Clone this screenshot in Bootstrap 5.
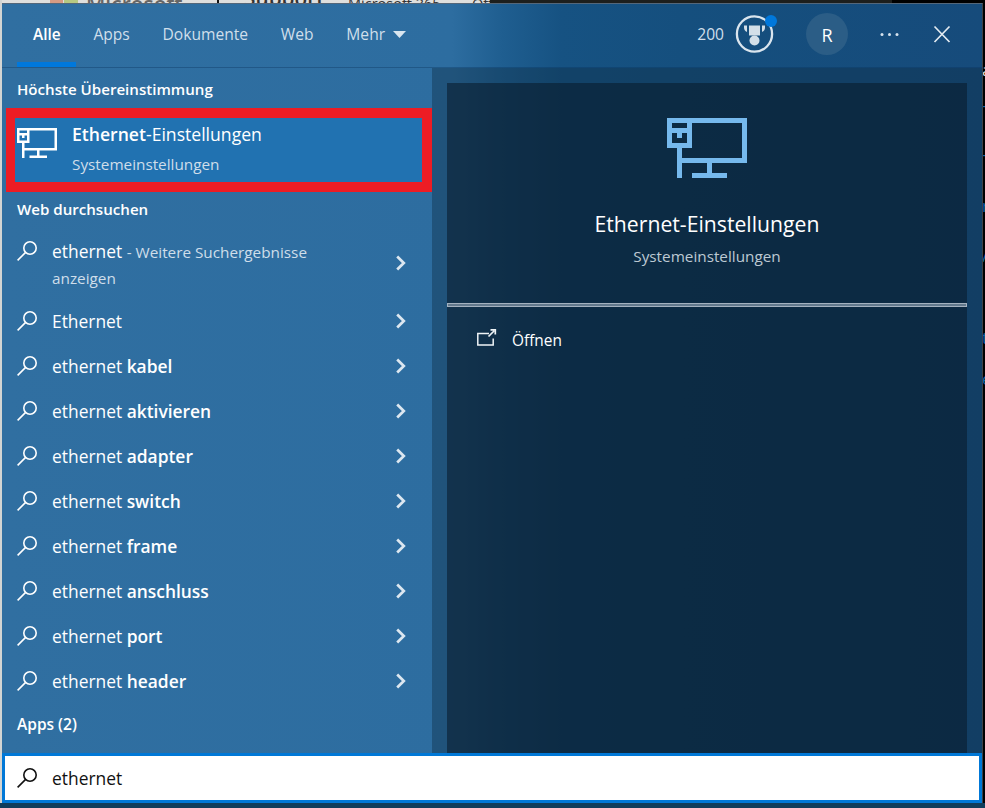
<!DOCTYPE html>
<html lang="de">
<head>
<meta charset="utf-8">
<title>Suche</title>
<link href="https://cdn.jsdelivr.net/npm/bootstrap@5.3.0/dist/css/bootstrap.min.css" rel="stylesheet">
<style>
html,body{height:808px;overflow:hidden}
body{background:#000;font-family:"Open Sans","Noto Sans",sans-serif;font-size:17.4px;line-height:26px;color:#fff}
.screen{width:985px;height:808px;background:#000;padding:3px 2px 5px 2px}
.strip-top{left:0;top:0;height:3px;width:490px;background:#dfdfdd;color:#333;font-weight:600;line-height:22px}
.strip-dark{left:490px;top:0;width:402px;height:3px;background:#1d1f1d}
.strip-top span{position:absolute;white-space:nowrap}
.strip-left{left:0;top:0;width:2px;height:803px;background:#d3d5d3}
.taskbar{left:0;top:803px;width:985px;height:5px;background:#103d5b}
.strip-right{left:983px;top:0;width:2px;height:803px}
.strip-right span{position:absolute;left:-1px;line-height:20px;font-size:17px;color:#0b65ac}
.search-win{height:800px;border-top:1px solid #54677a;border-right:1px solid #3b4247;background:linear-gradient(90deg,#306fa1 0,#2d6da0 450px,#1f5e90 500px,#165282 560px,#154f7e 680px,#164b7b 100%)}
.head-row{height:64px;border-bottom:1px solid rgba(10,50,90,.35);padding-left:15px;font-size:15.6px;color:#d0dfeb}
.tab-item{padding:0 16.4px;height:64px;line-height:61px;position:relative}
.tab-item.on{color:#fff;font-weight:600;font-size:15.4px;width:60px;padding-left:16px}
.tab-item.on:after{content:"";position:absolute;left:0;width:59px;bottom:1px;height:5px;background:#0078dc}
.results{width:430px}
.heading{font-size:15.1px;font-weight:600;padding-left:15px}
.heading.first-head{height:40px;line-height:42px}
.heading.web-head{height:36px;line-height:34px}
.heading.apps-head{font-size:15.5px;line-height:42px}
.best{margin-left:4px;width:426px;height:84px;border:10px solid #ed1c24;border-left-width:9px;background:#2172b1}
.best svg{margin:10px 0 0 2px}
.best-text{margin-left:15px;padding-top:3px}
.soft{font-size:15.3px;color:#cfdeea}
.res{height:45px;padding:0 26.5px 0 15px}
.res.tall{height:70px}
.res svg,.best svg{flex:none}
.label-text{margin-left:15px}
.go{color:#dce7f0}
.res b,.best b{font-weight:600}
.detail-side{background:rgba(12,42,64,.38);padding:15px 15px 0}
.detail{background:rgba(8,26,42,.57);height:100%}
.detail .hero{height:220px;padding-top:35px}
.hero svg{color:#76b9ed;display:block;margin:0 auto}
.hero-title{font-size:21.2px;line-height:30px;margin-top:31px}
.rule{height:4px;background:#62788c;border:1px solid #a3b1bf}
.avatar{width:42px;height:42px;border-radius:50%;background:#2b5d86;color:#fff;font-size:18px;line-height:44px;margin-left:24px}
.open-row{padding:21px 0 0 30px;font-size:15.4px}
.query{height:50px;border:3px solid #0078d7;background:#fff;color:#111;padding-left:12px}
</style>
<script src="https://cdn.jsdelivr.net/npm/bootstrap@5.3.0/dist/js/bootstrap.bundle.min.js"></script>
</head>
<body>
<svg width="0" height="0" class="position-absolute">
<symbol id="mag" viewBox="0 0 20 20"><circle cx="13" cy="7" r="6.2" fill="none" stroke="currentColor" stroke-width="1.6"/><path d="M8.600 11.400L.6 19.400" stroke="currentColor" stroke-width="1.6"/></symbol>
<symbol id="chev" viewBox="0 0 10 16"><path d="M1.200 1.500L7.800 8L1.200 14.500" fill="none" stroke="currentColor" stroke-width="2.700"/></symbol>
<symbol id="eth" viewBox="0 0 80 60"><path fill="currentColor" fill-rule="evenodd" d="M0 0H80V45H45V55H60V60H25V55H40V45H15V60H10V30H0ZM5 5V10H20V5ZM25 5V30H15V40H75V5ZM5 15V25H20V15H15V20H10V15Z"/></symbol>
</svg>
<div class="screen position-relative">
<div class="strip-top position-absolute overflow-hidden"><span style="left:50px;top:0;width:13px;height:3px;background:#d69b83"></span><span style="left:64px;top:0;width:14px;height:3px;background:#b7c982"></span><span style="left:86px;top:-7px;font-size:21px;color:#666">Microsoft</span><span style="left:217px;top:0;width:2px;height:3px;background:#111"></span><span style="left:244px;top:-13px;font-size:20.800px">Support</span><span style="left:348px;top:-7px;font-size:14.500px;font-weight:400">Microsoft 365</span><span style="left:472px;top:-7px;font-size:14.500px;font-weight:400">Off</span></div>
<div class="strip-dark position-absolute"></div>
<div class="strip-left position-absolute"></div>
<div class="strip-right position-absolute overflow-hidden"><span style="top:60px;color:#ddd">a</span><span style="top:95px">-</span><span style="top:144px">-</span><span style="top:196px">r</span><span style="top:246px">/</span><span style="top:328px">t</span><span style="top:369px">e</span></div>
<div class="taskbar position-absolute"></div>
<main class="search-win position-relative d-flex flex-column">
<header class="head-row d-flex">
<nav class="d-flex"><div class="tab-item on">Alle</div><div class="tab-item">Apps</div><div class="tab-item">Dokumente</div><div class="tab-item">Web</div><div class="tab-item">Mehr<svg class="ms-2" width="13" height="7" style="vertical-align:2px"><path d="M0 0H13L6.500 7Z" fill="#d8e5ef"/></svg></div></nav>
<div class="d-flex align-items-center ms-auto pb-1">
<span>200</span>
<svg class="ms-2" width="50" height="42" viewBox="0 0 50 42"><circle cx="22.500" cy="21" r="17.600" fill="none" stroke="#dae5ee" stroke-width="2.300"/><path d="M17 12.500H28V22.500H17ZM12 12.500H15V19Q12 17.500 12 14.500ZM30 12.500H33V14.500Q33 17.500 30 19Z" fill="#d3dfe8"/><circle cx="22.500" cy="27.500" r="5" fill="#d3dfe8"/><circle cx="39" cy="8" r="6" fill="#0078dc"/></svg>
<span class="avatar text-center">R</span>
<svg width="134" height="42"><g fill="#d7e3ed"><circle cx="34" cy="21.500" r="1.500"/><circle cx="41.500" cy="21.500" r="1.500"/><circle cx="49" cy="21.500" r="1.500"/></g><path d="M86.500 13.500L101.500 29M101.500 13.500L86.500 29" stroke="#e3ebf1" stroke-width="1.700"/></svg>
</div>
</header>
<div class="d-flex flex-grow-1">
<section class="results">
<div class="heading first-head">Höchste Übereinstimmung</div>
<div class="best d-flex">
<svg width="40" height="30" viewBox="0 0 80 60"><use href="#eth" width="80" height="60"/></svg>
<div class="best-text"><div style="font-size:17.600px"><b>Ethernet</b>-Einstellungen</div><div class="soft mt-1">Systemeinstellungen</div></div>
</div>
<div class="heading web-head">Web durchsuchen</div>
<div class="res tall d-flex"><svg style="margin-top:13px" width="20" height="20"><use href="#mag"/></svg><div class="label-text" style="padding-top:10px;width:300px"><div>ethernet <span class="soft">- Weitere Suchergebnisse</span></div><div class="soft">anzeigen</div></div><svg class="go ms-auto align-self-center" width="10" height="16"><use href="#chev"/></svg></div>
<div id="list"></div>
<div class="heading apps-head">Apps (2)</div>
</section>
<section class="detail-side flex-grow-1"><div class="detail">
<div class="hero text-center"><svg width="80" height="60"><use href="#eth"/></svg>
<div class="hero-title">Ethernet-Einstellungen</div><div class="soft mt-1" style="color:#bdc9d3">Systemeinstellungen</div></div>
<div class="rule"></div>
<div class="open-row d-flex"><svg width="20" height="20"><path d="M12 5.500H.8V17H16.200V10.500" fill="none" stroke="#eef3f6" stroke-width="1.500"/><path d="M11.500 8.500L17 3M13.500 1.800H18.300V6.500" fill="none" stroke="#eef3f6" stroke-width="1.700"/></svg><span class="label-text">Öffnen</span></div>
</div></section>
</div>
<div class="query d-flex align-items-center"><svg width="20" height="20"><use href="#mag"/></svg><span class="label-text">ethernet</span></div>
</main>
</div>
<script>
const rows = [['Ethernet',''],['ethernet','kabel'],['ethernet','aktivieren'],['ethernet','adapter'],['ethernet','switch'],['ethernet','frame'],['ethernet','anschluss'],['ethernet','port'],['ethernet','header']];
document.getElementById('list').innerHTML = rows.map(([a,b]) => `<div class="res d-flex align-items-center"><svg width="20" height="20"><use href="#mag"/></svg><span class="label-text">${a} <b>${b}</b></span><svg class="go ms-auto" width="10" height="16"><use href="#chev"/></svg></div>`).join('');
</script>
</body>
</html>
